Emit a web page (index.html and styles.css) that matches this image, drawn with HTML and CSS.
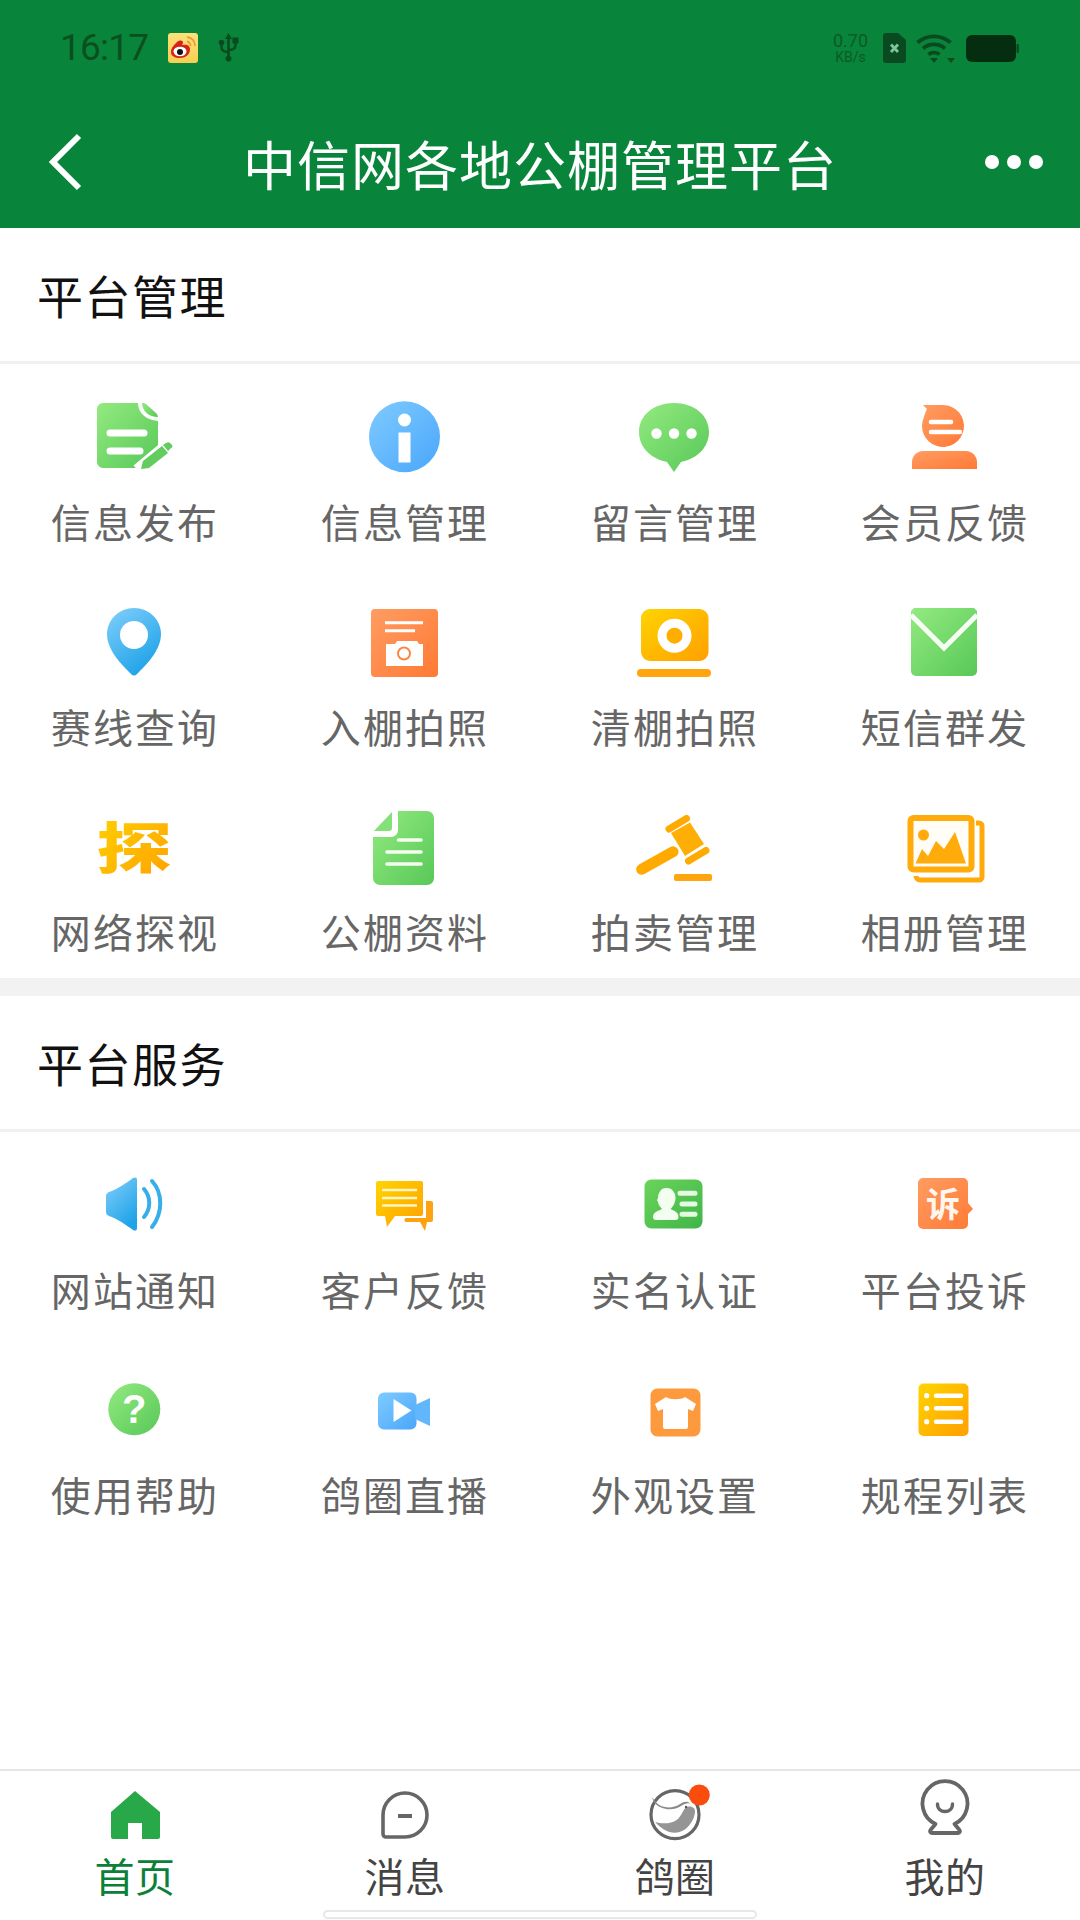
FILE: index.html
```html
<!DOCTYPE html>
<html lang="zh">
<head>
<meta charset="utf-8">
<title>中信网各地公棚管理平台</title>
<link rel="stylesheet" href="styles.css">
</head>
<body>
<svg class="defs" aria-hidden="true">
  <defs>
    <linearGradient id="gGreen" x1="0" y1="0" x2="1" y2="1"><stop offset="0" stop-color="#93ea80"/><stop offset="1" stop-color="#58c858"/></linearGradient>
    <linearGradient id="gBlue" x1="0" y1="0" x2="1" y2="1"><stop offset="0" stop-color="#7fcbff"/><stop offset="1" stop-color="#4aa6fb"/></linearGradient>
    <linearGradient id="gSky" x1="0" y1="0" x2="0.6" y2="1"><stop offset="0" stop-color="#83cffb"/><stop offset="1" stop-color="#1fa3e8"/></linearGradient>
    <linearGradient id="gOrange" x1="0" y1="0" x2="1" y2="1"><stop offset="0" stop-color="#ff9c62"/><stop offset="1" stop-color="#ff7a35"/></linearGradient>
    <linearGradient id="gYellow" x1="0" y1="0" x2="1" y2="1"><stop offset="0" stop-color="#ffd400"/><stop offset="1" stop-color="#ff9f00"/></linearGradient>
    <linearGradient id="gIdCard" x1="0" y1="0" x2="1" y2="1"><stop offset="0" stop-color="#6bd45a"/><stop offset="1" stop-color="#3fb548"/></linearGradient>
    <linearGradient id="gWeibo" x1="0" y1="0" x2="0" y2="1"><stop offset="0" stop-color="#fbe27c"/><stop offset="1" stop-color="#f6cf52"/></linearGradient>
  </defs>
</svg>
<div class="page">
  <header class="top">
    <div class="status">
      <div class="status-group">
        <span class="time">16:17</span>
        <svg class="st-weibo" viewBox="0 0 30 30"><rect width="30" height="30" rx="3" fill="url(#gWeibo)"/><path d="M19 4a8.500 8.500 0 0 1 8 9" fill="none" stroke="#ee9a3a" stroke-width="1.800"/><path d="M19 8.500a4 4 0 0 1 3.500 4.500" fill="none" stroke="#ee9a3a" stroke-width="1.800"/><path d="M3 19c0-4 3-7 6-10 3-2 6-2 6 1l-1 2c4-1 8 0 8 4 0 6-5 9-10 9S3 23 3 19z" fill="#d9201a"/><ellipse cx="12" cy="18.500" rx="6.500" ry="4.800" fill="#fff"/><circle cx="12" cy="19" r="3" fill="#111"/></svg>
        <svg class="st-usb" viewBox="0 0 23 30"><path d="M11.500 0l3.500 6h-2.200v17a3 3 0 1 1-2.600 0V6H8z" fill="#0a4a20"/><path d="M11.500 19c-4 0-7-1-7-5v-3M11.500 17c4 0 7-1 7-5V9" fill="none" stroke="#0a4a20" stroke-width="2.500"/><circle cx="4.500" cy="9.500" r="2.800" fill="#0a4a20"/><rect x="15.500" y="4.500" width="6" height="6" fill="#0a4a20"/></svg>
      </div>
      <div class="status-group status-right">
        <div class="speed"><span>0.70</span><span class="speed-unit">KB/s</span></div>
        <svg class="st-sim" viewBox="0 0 23 30"><path d="M3 0h12l8 7v20a3 3 0 0 1-3 3H3a3 3 0 0 1-3-3V3a3 3 0 0 1 3-3z" fill="#0a4a20"/><path d="M8 11.500l7 7.500M15 11.500l-7 7.500" stroke="#7fc49a" stroke-width="2.800"/></svg>
        <svg class="st-wifi" viewBox="0 0 40 30"><path d="M1.500 9.500a25 25 0 0 1 33 0M7 15.500a17 17 0 0 1 22 0M12.500 21.500a9 9 0 0 1 11 0" fill="none" stroke="#0a4a20" stroke-width="3.800"/><path d="M14 25h8l-4 5z" fill="#0a4a20"/><path d="M31 25h8l-4 5z" fill="#0a4a20"/></svg>
        <svg class="st-bat" viewBox="0 0 53 27"><rect width="50" height="27" rx="6" fill="#052e10"/><rect x="50.500" y="9" width="2.500" height="9" rx="1.200" fill="#0a4a20"/></svg>
      </div>
    </div>
    <nav class="navbar">
      <svg class="nav-side" viewBox="0 0 70 60"><path d="M44 4 18 30l26 26" fill="none" stroke="#fff" stroke-width="6"/></svg>
      <h1 class="title">中信网各地公棚管理平台</h1>
      <svg class="nav-side nav-more" viewBox="0 0 70 60"><circle cx="15" cy="30" r="7" fill="#fff"/><circle cx="37" cy="30" r="7" fill="#fff"/><circle cx="59" cy="30" r="7" fill="#fff"/></svg>
    </nav>
  </header>

  <main class="main">
    <section class="section section-band">
      <h2 class="section-title">平台管理</h2>
      <div class="grid">
        <div class="cell">
          <svg class="ic" viewBox="0 0 80 80"><path d="M8 6h35c0 9 7 17 20 18v40a7 7 0 0 1-7 7H8a6 6 0 0 1-6-6V12a6 6 0 0 1 6-6z" fill="url(#gGreen)"/><path d="M47 6c2 0 3 0 5 2l9 8c1 1 2 3 2 4-9 0-16-6-16-14z" fill="url(#gGreen)"/><path d="M15 36h34M15 54h30" stroke="#fff" stroke-width="7" stroke-linecap="round"/><path d="M44 75 74 50" stroke="#fff" stroke-width="17"/><path d="M46 72l2-8 19-15 6 7-19 15z" fill="#62cc5e"/><path d="M68 48l3-2c2-1 3-1 4 0l2 2c1 1 0 3-1 3l-3 3z" fill="#62cc5e"/></svg>
          <span class="label">信息发布</span>
        </div>
        <div class="cell">
          <svg class="ic" viewBox="0 0 80 80"><circle cx="39.500" cy="39.700" r="35.500" fill="url(#gBlue)"/><circle cx="39.500" cy="23" r="6.500" fill="#fff"/><rect x="33.500" y="35.500" width="12" height="30" fill="#fff"/></svg>
          <span class="label">信息管理</span>
        </div>
        <div class="cell">
          <svg class="ic" viewBox="0 0 80 80"><path d="M39 6C19 6 4 18 4 35c0 16 13 27 28 30l7 10 7-10c15-3 28-14 28-30C74 18 59 6 39 6z" fill="url(#gGreen)"/><circle cx="21.500" cy="36.500" r="5.200" fill="#fff"/><circle cx="39" cy="36.500" r="5.200" fill="#fff"/><circle cx="56.500" cy="36.500" r="5.200" fill="#fff"/></svg>
          <span class="label">留言管理</span>
        </div>
        <div class="cell">
          <svg class="ic" viewBox="0 0 80 80"><path d="M18 8h20a21 21 0 1 1-19 12c1-4 2-6 3-8z" fill="url(#gOrange)"/><path d="M26 25h20M26 35h29" stroke="#fff" stroke-width="4.500" stroke-linecap="round"/><path d="M7 72V65c0-6 5-11 11-11h43c6 0 11 5 11 11v7z" fill="url(#gOrange)"/></svg>
          <span class="label">会员反馈</span>
        </div>
        <div class="cell">
          <svg class="ic" viewBox="0 0 80 80"><path d="M39 6c15 0 27 12 27 26 0 16-14 30-24 40-2 2-4 2-6 0C26 62 12 48 12 32 12 18 24 6 39 6z" fill="url(#gSky)"/><circle cx="39" cy="33" r="14" fill="#fff"/></svg>
          <span class="label">赛线查询</span>
        </div>
        <div class="cell">
          <svg class="ic" viewBox="0 0 80 80"><rect x="6" y="7" width="67" height="68" rx="4" fill="url(#gOrange)"/><path d="M20 20.700h38M20 28.700h30" stroke="#fff" stroke-width="3"/><path d="M21 42h9l2-3h20l2 3h4v22H21z" fill="#fff"/><circle cx="39" cy="51.500" r="6" fill="#fff" stroke="#ff8442" stroke-width="2"/></svg>
          <span class="label">入棚拍照</span>
        </div>
        <div class="cell">
          <svg class="ic" viewBox="0 0 80 80"><rect x="6" y="7" width="67.500" height="52" rx="9" fill="url(#gYellow)"/><circle cx="39.500" cy="33.700" r="12.500" fill="#ffae00" stroke="#fff" stroke-width="9"/><rect x="2" y="67" width="74" height="8" rx="4" fill="#ffa60f"/></svg>
          <span class="label">清棚拍照</span>
        </div>
        <div class="cell">
          <svg class="ic" viewBox="0 0 80 80"><path d="M9 6h60l3 3v60a5 5 0 0 1-5 5H11a5 5 0 0 1-5-5V9z" fill="url(#gGreen)"/><path d="M6 13 39 46 72 13" fill="none" stroke="#f6fdf4" stroke-width="5"/></svg>
          <span class="label">短信群发</span>
        </div>
        <div class="cell">
          <svg class="ic ic-open" viewBox="0 0 80 80"><text class="ic-tan" transform="translate(39 40) scale(1.22 .88)" x="0" y="24" text-anchor="middle" fill="url(#gYellow)">探</text></svg>
          <span class="label">网络探视</span>
        </div>
        <div class="cell">
          <svg class="ic" viewBox="0 0 80 80"><path d="M33 4h29a7 7 0 0 1 7 7v60a7 7 0 0 1-7 7H15a7 7 0 0 1-7-7V30h18a7 7 0 0 0 7-7z" fill="url(#gGreen)"/><path d="M27 5v16a3 3 0 0 1-3 3H9z" fill="#84e078"/><path d="M33.500 33H56M22 45h34M22 57h34" stroke="#f3fdf0" stroke-width="3.600" stroke-linecap="round"/></svg>
          <span class="label">公棚资料</span>
        </div>
        <div class="cell">
          <svg class="ic" viewBox="0 0 80 80"><g fill="none" stroke="#ffaa00" stroke-linecap="round"><path d="M6.700 62.300 38 44.700" stroke-width="11"/><path d="M34 22 51.500 11.500M53.500 54 71 43.500" stroke-width="7"/></g><path d="M36 26 55 15.500 69 37 50 49z" fill="#ffae05"/><rect x="39" y="67" width="38" height="7" rx="2" fill="#ffa60f"/></svg>
          <span class="label">拍卖管理</span>
        </div>
        <div class="cell">
          <svg class="ic" viewBox="0 0 80 80"><path d="M71 16h3a3 3 0 0 1 3 3v51a3 3 0 0 1-3 3H15a4 4 0 0 1-4-4" fill="none" stroke="#ffaa0a" stroke-width="5"/><rect x="5.500" y="11" width="61" height="51.500" rx="3" fill="#fffdf6" stroke="#ffac0a" stroke-width="6"/><circle cx="18.500" cy="28" r="5.500" fill="#ffaa0a"/><path d="M10.500 56.500 17 42l6 7 8-15 8 8 11-17 11 31.500z" fill="#ffac0a"/></svg>
          <span class="label">相册管理</span>
        </div>
      </div>
    </section>

    <section class="section">
      <h2 class="section-title">平台服务</h2>
      <div class="grid">
        <div class="cell">
          <svg class="ic" viewBox="0 0 80 80"><path d="M11 31c0-2 1-3 3-4 9-3 17-9 24-14 2-1 4-1 4 2v48c0 3-2 3-4 2-7-5-15-11-24-14-2-1-3-2-3-4z" fill="url(#gSky)"/><path d="M49 24c7 8 7 20 0 28M57 16c11 12 11 32 0 46" fill="none" stroke="#35aee9" stroke-width="4" stroke-linecap="round"/></svg>
          <span class="label">网站通知</span>
        </div>
        <div class="cell">
          <svg class="ic" viewBox="0 0 80 80"><path d="M61 36h5a2 2 0 0 1 2 2v17a2 2 0 0 1-2 2h-4l-2 9-5-9H41c-2 0-2-4 0-4h20z" fill="#ffa20f"/><path d="M13 16h43a2 2 0 0 1 2 2v31a2 2 0 0 1-2 2H30l-8 11-2-11h-7a2 2 0 0 1-2-2V18a2 2 0 0 1 2-2z" fill="url(#gYellow)"/><path d="M17 25h35M17 33h35M17 40.500h35" stroke="#fff6c8" stroke-width="2.600"/></svg>
          <span class="label">客户反馈</span>
        </div>
        <div class="cell">
          <svg class="ic" viewBox="0 0 80 80"><rect x="9.500" y="14.500" width="58" height="49" rx="7" fill="url(#gIdCard)"/><path d="M31.500 23c6 0 9 5 9 10s-3 9-5 11c4 2 8 3 8 8 0 2-1 3-3 3H21c-2 0-3-1-3-3 0-5 5-6 9-8-2-2-4-5-4-7l-1-2 1-2c0-5 3-10 8-10z" fill="#f3fdf0"/><path d="M45 28.300h15M47 39h13M47 49.300h13" stroke="#e6f9e2" stroke-width="5" stroke-linecap="round"/></svg>
          <span class="label">实名认证</span>
        </div>
        <div class="cell">
          <svg class="ic" viewBox="0 0 80 80"><path d="M18 13h40a5 5 0 0 1 5 5v20l5 6-5 5v10a5 5 0 0 1-5 5H18a5 5 0 0 1-5-5V18a5 5 0 0 1 5-5z" fill="url(#gOrange)"/><text class="ic-su" x="38" y="52" text-anchor="middle" fill="#fff6ee">诉</text></svg>
          <span class="label">平台投诉</span>
        </div>
        <div class="cell">
          <svg class="ic" viewBox="0 0 80 80"><circle cx="39.300" cy="39.300" r="26" fill="url(#gGreen)"/><text class="ic-help" x="39.300" y="53" text-anchor="middle" fill="#fff">?</text></svg>
          <span class="label">使用帮助</span>
        </div>
        <div class="cell">
          <svg class="ic" viewBox="0 0 80 80"><rect x="13" y="22.500" width="38.500" height="37" rx="6" fill="url(#gBlue)"/><path d="M50 35l15-7v28l-15-7z" fill="#62b6fb"/><path d="M28.500 29v23l18-11.500z" fill="#fff"/></svg>
          <span class="label">鸽圈直播</span>
        </div>
        <div class="cell">
          <svg class="ic" viewBox="0 0 80 80"><rect x="15.500" y="18.500" width="50" height="48" rx="7" fill="#fe9a3e"/><path d="M31 27c4 3 15 3 19 0l11 7-3 7-5-2v18a2 2 0 0 1-2 2H30a2 2 0 0 1-2-2V39l-5 2-3-7z" fill="#fff"/></svg>
          <span class="label">外观设置</span>
        </div>
        <div class="cell">
          <svg class="ic" viewBox="0 0 80 80"><rect x="13.500" y="13.500" width="50" height="52.500" rx="5" fill="url(#gYellow)"/><circle cx="21.700" cy="25.700" r="2.600" fill="#fff"/><circle cx="21.700" cy="38.300" r="2.600" fill="#fff"/><circle cx="21.700" cy="51.700" r="2.600" fill="#fff"/><path d="M31 25.700h25M31 38.300h25M31 51.700h25" stroke="#fff" stroke-width="4.400" stroke-linecap="round"/></svg>
          <span class="label">规程列表</span>
        </div>
      </div>
    </section>
  </main>

  <footer class="tabbar">
    <div class="tabs">
      <div class="tab tab-active">
        <svg class="tab-ic" viewBox="0 0 72 72"><path d="M36 13 61 34v25a2 2 0 0 1-2 2H43V45H29v16H14a2 2 0 0 1-2-2V34z" fill="#28a848"/></svg>
        <span>首页</span>
      </div>
      <div class="tab">
        <svg class="tab-ic" viewBox="0 0 72 72"><path d="M14 37a22 22 0 1 1 22 22H17a3 3 0 0 1-3-3z" fill="none" stroke="#666" stroke-width="3.600"/><path d="M29 38h14" stroke="#666" stroke-width="4"/></svg>
        <span>消息</span>
      </div>
      <div class="tab">
        <svg class="tab-ic" viewBox="0 0 72 72"><circle cx="36" cy="36.700" r="24" fill="none" stroke="#666" stroke-width="3.200"/><path d="M16 43.700c6 2 15 3 22-2 5-4 6-11 10-13 4-1 8 1 8 4 0 10-9 22-20 22-8 0-15-5-20-11z" fill="#959595"/><path d="M12.500 18.700l5 6c5 5 15 7 24 1 3-2 7-3 10 0-3-1-6 0-9 2-9 6-21 4-27-3z" fill="#8a8a8a"/><circle cx="47" cy="29" r="1.200" fill="#555"/><circle cx="60.300" cy="17" r="10.500" fill="#fa4c0c"/></svg>
        <span>鸽圈</span>
      </div>
      <div class="tab">
        <svg class="tab-ic" viewBox="0 0 72 72"><path d="M26.500 46A22.500 22.500 0 1 1 45.500 46L50.500 52a1.800 1.800 0 0 1-1.500 3H23a1.800 1.800 0 0 1-1.500-3z" fill="none" stroke="#666" stroke-width="3.800" stroke-linejoin="round"/><path d="M28.500 26c0 10 15 10 15 0" fill="none" stroke="#666" stroke-width="3.400" stroke-linecap="round"/></svg>
        <span>我的</span>
      </div>
    </div>
    <div class="home-bar"></div>
  </footer>
</div>
</body>
</html>
```
FILE: styles.css
```css
* { box-sizing: border-box; }
html, body { margin: 0; padding: 0; background: #fff; }
body { font-family: "Noto Sans CJK SC", "Noto Sans", sans-serif; }
.defs { display: block; width: 0; height: 0; }
.page { width: 1080px; height: 1920px; display: flex; flex-direction: column; overflow: hidden; }

.top { background: #08853a; height: 228px; display: flex; flex-direction: column; }
.status { height: 96px; padding: 0 61px 0 60px; display: flex; justify-content: space-between; align-items: center; }
.status-group { display: flex; align-items: center; }
.time { font-family: Roboto, sans-serif; font-weight: 400; font-size: 37px; line-height: 44px; color: #0b4f20; width: 87px; letter-spacing: -.8px; white-space: nowrap; }
.st-weibo { width: 30px; height: 30px; margin-left: 21px; }
.st-usb { width: 23px; height: 30px; margin-left: 19px; }
.speed { width: 37px; display: flex; flex-direction: column; align-items: center; font-family: Roboto, sans-serif; font-size: 18px; line-height: 18px; color: #0b5a28; white-space: nowrap; }
.speed-unit { font-size: 14px; line-height: 15px; }
.st-sim { width: 23px; height: 30px; margin-left: 14px; }
.st-wifi { width: 40px; height: 30px; margin-left: 10px; }
.st-bat { width: 53px; height: 27px; margin-left: 10px; }

.navbar { height: 132px; padding: 0 35px; display: flex; align-items: center; }
.nav-side { width: 70px; height: 60px; flex: none; }
.nav-more { transform: translateX(2px); }
.title { flex: 1; margin: 0; text-align: center; color: #fff; font-size: 53px; line-height: 72px; font-weight: 400; letter-spacing: 1px; padding-top: 2px; }

.main { flex: 1; }
.section-band { border-bottom: 18px solid #f2f2f2; }
.section-title { margin: 0; height: 136px; padding: 0 0 2px 37px; border-bottom: 3px solid #f0f0f0; display: flex; align-items: center; font-size: 46px; font-weight: 400; color: #111; letter-spacing: 1.500px; }
.grid { display: grid; grid-template-columns: repeat(4, 270px); row-gap: 53px; padding: 33px 0 19px; }
.cell { display: flex; flex-direction: column; align-items: center; row-gap: 16px; }
.ic { width: 80px; height: 80px; display: block; }
.ic-open { overflow: visible; }
.label { font-size: 40px; line-height: 56px; color: #666; letter-spacing: 2.100px; white-space: nowrap; }
.ic-tan { font-family: "Noto Sans CJK SC", sans-serif; font-weight: 900; font-size: 62px; }
.ic-su { font-family: "Noto Sans CJK SC", sans-serif; font-weight: 700; font-size: 34px; }
.ic-help { font-family: "Liberation Sans", sans-serif; font-weight: 700; font-size: 40px; }

.tabbar { height: 151px; border-top: 2px solid #e5e5e5; display: flex; flex-direction: column; align-items: center; }
.tabs { width: 100%; display: grid; grid-template-columns: repeat(4, 270px); padding-top: 7px; }
.tab { display: flex; flex-direction: column; align-items: center; font-size: 40px; line-height: 50px; color: #444; letter-spacing: .5px; }
.tab-active { color: #0a8038; }
.tab-ic { width: 72px; height: 72px; display: block; }
.home-bar { width: 434px; height: 9px; margin-top: 10px; background: #fff; border: 2px solid #e8e8e8; border-radius: 5px; }
```
